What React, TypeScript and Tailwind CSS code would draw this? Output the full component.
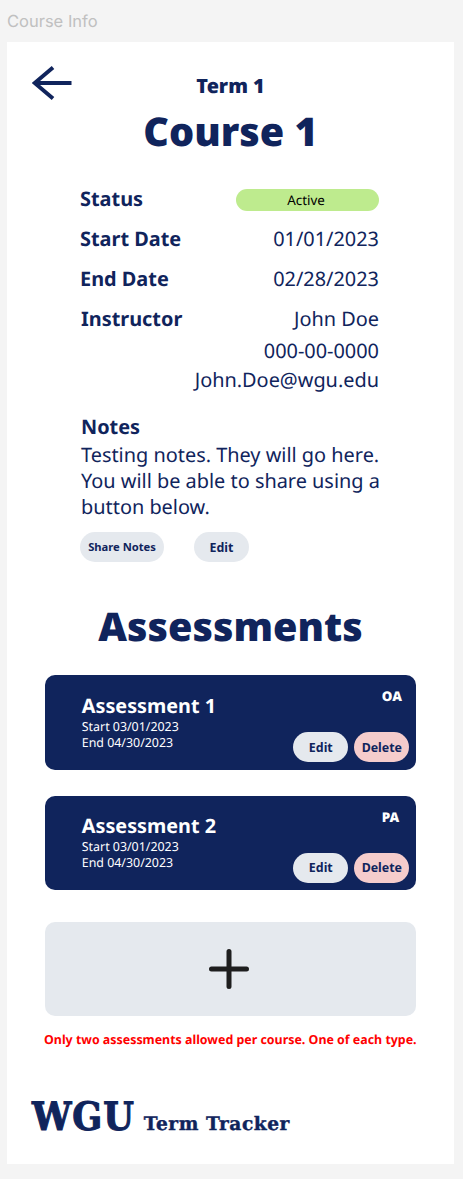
import type { ReactNode } from "react";

function InfoRow({ label, children, className }: { label: string; children: ReactNode; className: string }) {
  return (
    <div className={`flex items-center justify-between ${className}`}>
      <span className="font-bold">{label}</span>
      {children}
    </div>
  );
}

function Pill({ children, className }: { children: ReactNode; className: string }) {
  return (
    <button className={`flex h-[30px] items-center justify-center rounded-full font-bold whitespace-nowrap text-[#10245c] ${className}`}>
      {children}
    </button>
  );
}

function AssessmentCard({ title, type }: { title: string; type: string }) {
  return (
    <section className="flex h-[94.5px] w-[371px] justify-between rounded-[10px] bg-[#10245c] pl-[36.5px] text-white">
      <div className="pt-[16.5px]">
        <h3 className="text-[19.8px] leading-[27px] font-bold">{title}</h3>
        <p className="text-[12.4px] leading-4">Start 03/01/2023</p>
        <p className="text-[12.4px] leading-4">End 04/30/2023</p>
      </div>
      <div className="flex flex-col justify-between pt-[11px] pr-[7px] pb-[7.5px]">
        <span className="pl-[88.5px] text-[13.4px] leading-5 font-black">{type}</span>
        <div className="flex gap-1.5">
          <Pill className="w-[55px] bg-[#e5e9ee] pt-0.5 text-[12.4px]">Edit</Pill>
          <Pill className="w-[55px] bg-[#f5cccc] pt-0.5 text-[12.4px]">Delete</Pill>
        </div>
      </div>
    </section>
  );
}

export default function App() {
  return (
    <div className="h-[1179px] w-[463px] overflow-hidden bg-[#f4f4f4] pl-[7px] [text-rendering:geometricPrecision]">
      <div className="flex h-[42px] items-center font-['Inter',sans-serif] text-[16.5px] text-[#c0c0c0]">Course Info</div>
      <main className="flex h-[1122px] w-[447px] flex-col bg-white font-['Noto_Sans',sans-serif] text-[19.9px] text-[#10245c]">
        <header className="flex h-[118px] pt-6 pl-[25px]">
          <svg className="h-[34px] w-10" viewBox="0 0 40 34" fill="none" stroke="currentColor" strokeWidth="3.9">
            <path d="M21 1.5 2.7 17 21 32.5M2.7 17H39.5" />
          </svg>
          <div className="flex w-[317px] flex-col items-center">
            <p className="pt-[6px] text-[19.8px] leading-7 font-black">Term 1</p>
            <h1 className="text-[39.6px] leading-[62px] font-black">Course 1</h1>
          </div>
        </header>
        <section className="flex w-[372px] flex-col pt-5 pl-[73px]">
          <InfoRow label="Status" className="h-[38px]">
            <span className="mt-px flex h-[22px] w-[143px] items-center justify-center rounded-full bg-[#beeb8e] pt-0.5 pr-[3px] text-[13.4px] text-black">Active</span>
          </InfoRow>
          <InfoRow label="Start Date" className="mt-px h-10">01/01/2023</InfoRow>
          <InfoRow label="End Date" className="h-10">02/28/2023</InfoRow>
          <InfoRow label="Instructor" className="h-10 pl-px">John Doe</InfoRow>
          <p className="text-right leading-6">000-00-0000</p>
          <p className="pt-1 text-right leading-[26px]">John.Doe@wgu.edu</p>
        </section>
        <section className="pt-[19px] pl-[74px]">
          <h2 className="leading-[29px] font-bold">Notes</h2>
          <p className="w-[310px] pt-px leading-[26px]">
            Testing notes. They will go here.<br />You will be able to share using a<br />button below.
          </p>
          <div className="-ml-px flex gap-[30px] pt-3">
            <Pill className="w-[84px] bg-[#e5e9ee] pt-px text-[11.2px]">Share Notes</Pill>
            <Pill className="w-[55px] bg-[#e5e9ee] pt-0.5 text-[12.4px]">Edit</Pill>
          </div>
        </section>
        <h2 className="mt-[35.5px] text-center text-[39.6px] leading-[56px] font-black">Assessments</h2>
        <div className="flex flex-col gap-[26px] pt-[21.5px] pl-[38.3px]">
          <AssessmentCard title="Assessment 1" type="OA" />
          <AssessmentCard title="Assessment 2" type="PA" />
          <button className="mt-[6px] flex h-[94px] w-[371px] items-center justify-center rounded-[10px] bg-[#e5e9ee] pr-1">
            <svg className="h-10 w-10" viewBox="0 0 40 40" fill="none" stroke="#1e1e1e" strokeWidth="5" strokeLinecap="round">
              <path d="M20 2.5V37.5M2.5 20H37.5" />
            </svg>
          </button>
        </div>
        <p className="pt-[13.5px] pl-[37px] text-[12.42px] leading-5 font-bold whitespace-nowrap text-[#ff0000]">Only two assessments allowed per course. One of each type.</p>
        <footer className="flex items-baseline gap-[9px] pt-[42px] pl-[25px] font-['DejaVu_Serif',serif] font-bold">
          <span className="text-[39px] leading-[50px] tracking-[0.9px] font-stretch-condensed [-webkit-text-stroke:1px_#10245c]">WGU</span>
          <span className="text-[18.6px] tracking-[0.55px] [-webkit-text-stroke:0.4px_#10245c]">Term Tracker</span>
        </footer>
      </main>
    </div>
  );
}
